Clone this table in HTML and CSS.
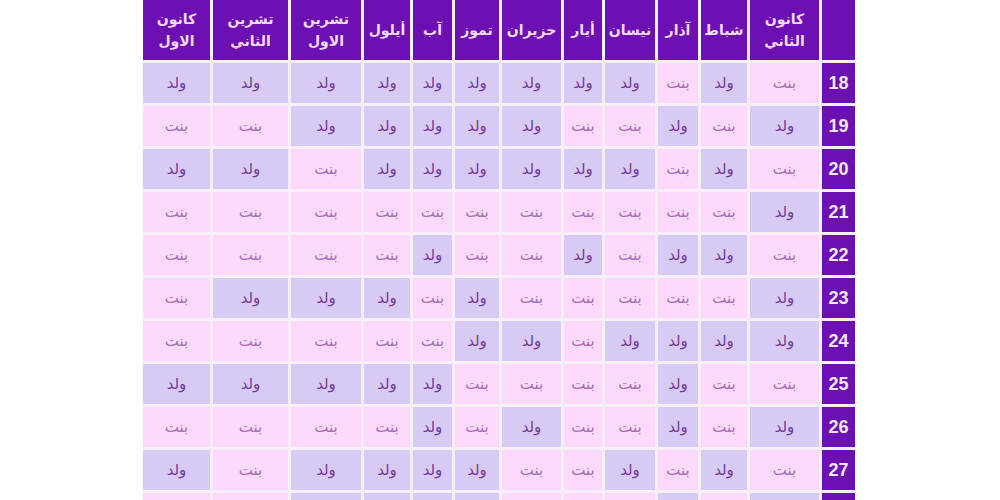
FILE: index.html
```html
<!DOCTYPE html>
<html lang="ar" dir="rtl">
<head>
<meta charset="utf-8">
<title>جدول الحمل الصيني</title>
<link rel="stylesheet" href="styles.css">
</head>
<body>
<div class="page">
  <div class="chart">
    <div class="hd"></div>
    <div class="hd">كانون<br>الثاني</div>
    <div class="hd">شباط</div>
    <div class="hd">آذار</div>
    <div class="hd">نيسان</div>
    <div class="hd">أيار</div>
    <div class="hd">حزيران</div>
    <div class="hd">تموز</div>
    <div class="hd">آب</div>
    <div class="hd">أيلول</div>
    <div class="hd">تشرين<br>الاول</div>
    <div class="hd">تشرين<br>الثاني</div>
    <div class="hd">كانون<br>الاول</div>

    <div class="num">18</div>
    <div class="g">بنت</div><div class="b">ولد</div><div class="g">بنت</div><div class="b">ولد</div><div class="b">ولد</div><div class="b">ولد</div><div class="b">ولد</div><div class="b">ولد</div><div class="b">ولد</div><div class="b">ولد</div><div class="b">ولد</div><div class="b">ولد</div>

    <div class="num">19</div>
    <div class="b">ولد</div><div class="g">بنت</div><div class="b">ولد</div><div class="g">بنت</div><div class="g">بنت</div><div class="b">ولد</div><div class="b">ولد</div><div class="b">ولد</div><div class="b">ولد</div><div class="b">ولد</div><div class="g">بنت</div><div class="g">بنت</div>

    <div class="num">20</div>
    <div class="g">بنت</div><div class="b">ولد</div><div class="g">بنت</div><div class="b">ولد</div><div class="b">ولد</div><div class="b">ولد</div><div class="b">ولد</div><div class="b">ولد</div><div class="b">ولد</div><div class="g">بنت</div><div class="b">ولد</div><div class="b">ولد</div>

    <div class="num">21</div>
    <div class="b">ولد</div><div class="g">بنت</div><div class="g">بنت</div><div class="g">بنت</div><div class="g">بنت</div><div class="g">بنت</div><div class="g">بنت</div><div class="g">بنت</div><div class="g">بنت</div><div class="g">بنت</div><div class="g">بنت</div><div class="g">بنت</div>

    <div class="num">22</div>
    <div class="g">بنت</div><div class="b">ولد</div><div class="b">ولد</div><div class="g">بنت</div><div class="b">ولد</div><div class="g">بنت</div><div class="g">بنت</div><div class="b">ولد</div><div class="g">بنت</div><div class="g">بنت</div><div class="g">بنت</div><div class="g">بنت</div>

    <div class="num">23</div>
    <div class="b">ولد</div><div class="g">بنت</div><div class="g">بنت</div><div class="g">بنت</div><div class="g">بنت</div><div class="g">بنت</div><div class="b">ولد</div><div class="g">بنت</div><div class="b">ولد</div><div class="b">ولد</div><div class="b">ولد</div><div class="g">بنت</div>

    <div class="num">24</div>
    <div class="b">ولد</div><div class="b">ولد</div><div class="b">ولد</div><div class="b">ولد</div><div class="g">بنت</div><div class="b">ولد</div><div class="b">ولد</div><div class="g">بنت</div><div class="g">بنت</div><div class="g">بنت</div><div class="g">بنت</div><div class="g">بنت</div>

    <div class="num">25</div>
    <div class="g">بنت</div><div class="g">بنت</div><div class="b">ولد</div><div class="g">بنت</div><div class="g">بنت</div><div class="g">بنت</div><div class="g">بنت</div><div class="b">ولد</div><div class="b">ولد</div><div class="b">ولد</div><div class="b">ولد</div><div class="b">ولد</div>

    <div class="num">26</div>
    <div class="b">ولد</div><div class="g">بنت</div><div class="b">ولد</div><div class="g">بنت</div><div class="g">بنت</div><div class="b">ولد</div><div class="g">بنت</div><div class="b">ولد</div><div class="g">بنت</div><div class="g">بنت</div><div class="g">بنت</div><div class="g">بنت</div>

    <div class="num">27</div>
    <div class="g">بنت</div><div class="b">ولد</div><div class="g">بنت</div><div class="b">ولد</div><div class="g">بنت</div><div class="g">بنت</div><div class="b">ولد</div><div class="b">ولد</div><div class="b">ولد</div><div class="b">ولد</div><div class="g">بنت</div><div class="b">ولد</div>

    <div class="num">28</div>
    <div class="b">ولد</div><div class="g">بنت</div><div class="b">ولد</div><div class="g">بنت</div><div class="g">بنت</div><div class="g">بنت</div><div class="b">ولد</div><div class="b">ولد</div><div class="b">ولد</div><div class="b">ولد</div><div class="g">بنت</div><div class="g">بنت</div>
  </div>
</div>
</body>
</html>
```

FILE: styles.css
```css
html, body {
  margin: 0;
  padding: 0;
  background: #ffffff;
  height: 500px;
  overflow: hidden;
}

.page {
  display: flex;
  justify-content: center;
  padding-right: 2px;
}

.chart {
  direction: rtl;
  display: grid;
  grid-template-columns: 33px 69px 46px 40px 50px 38px 59px 44px 39px 46px 70px 75px 67px;
  grid-template-rows: 60px repeat(11, 40px);
  gap: 3px;
  background: #f6eef9;
  font-family: "DejaVu Sans", "Noto Sans", sans-serif;
}

.hd {
  background: #6c10b4;
  color: #f7dcf7;
  font-weight: bold;
  font-size: 14px;
  line-height: 22px;
  display: flex;
  align-items: center;
  justify-content: center;
  text-align: center;
}

.num {
  background: #6c10b4;
  color: #f7e8fb;
  font-family: "Liberation Sans", Arial, sans-serif;
  font-weight: bold;
  font-size: 18px;
  display: flex;
  align-items: center;
  justify-content: center;
}

.b, .g {
  display: flex;
  align-items: center;
  justify-content: center;
  font-size: 15px;
}

.b {
  background: #d7cbf5;
  color: #75379a;
}

.g {
  background: #fcd9fa;
  color: #a66fb8;
}
```
